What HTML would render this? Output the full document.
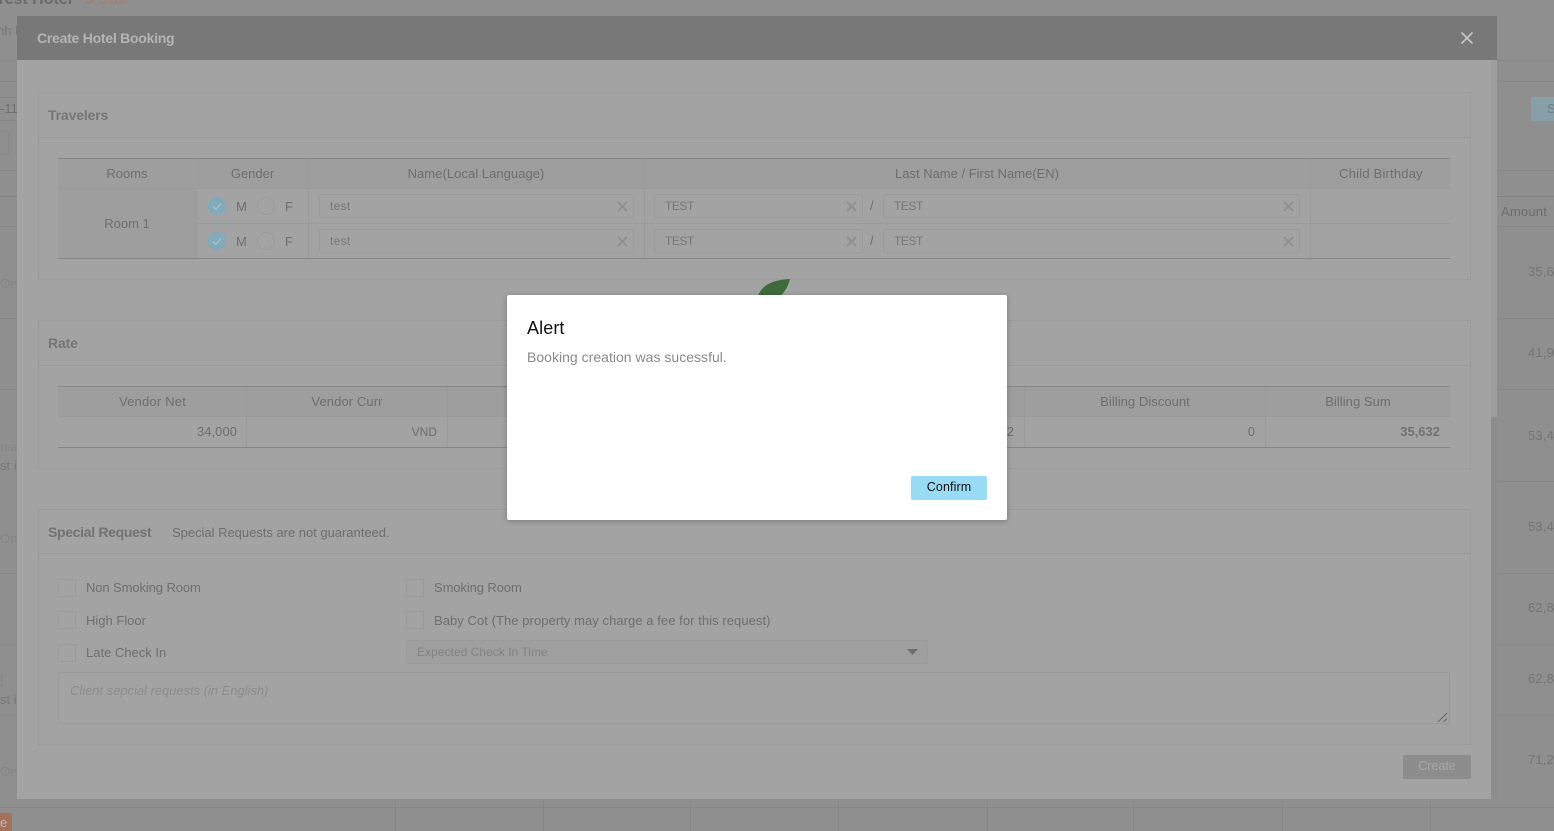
<!DOCTYPE html>
<html><head><meta charset="utf-8"><title>Create Hotel Booking</title>
<style>
*{box-sizing:border-box}
html,body{margin:0;padding:0}
html{width:1554px;height:831px;overflow:hidden}
body{width:1554px;height:831px;overflow:hidden;position:relative;background:#8f8f8f;font-family:"Liberation Sans",sans-serif;font-size:13px;color:#6e6e6e}
.a{position:absolute}
.t{position:absolute;white-space:nowrap;line-height:16px;letter-spacing:0}
.c{transform:translateX(-50%)}
.r{transform:translateX(-100%)}
.h{position:absolute;height:1px;background:#9a9a9a}
.v{position:absolute;width:1px;background:#9b9b9b}
.dk{position:absolute;height:1px;background:#858585}
.pan{position:absolute;left:38px;width:1433px;border:1px solid #9b9b9b}
.thd{position:absolute;background:#9e9e9e;height:30px}
.inp{position:absolute;height:24px;border:1px solid #9b9b9b;border-radius:2px;background:#a3a3a3}
.inp span{position:absolute;left:10px;top:3px;line-height:16px;font-size:12px;color:#777;letter-spacing:.3px}
.inp span.u{letter-spacing:-.45px}
.inp svg{position:absolute;right:5px;top:6px}
.rad{position:absolute;width:18px;height:18px;border-radius:50%;border:1px solid #9a9a9a}
.rad.on{background:#82aab8;border:0}
.rad svg{position:absolute;left:0;top:0}
.cb{position:absolute;width:18px;height:18px;border:1px solid #9a9a9a;background:#a3a3a3}
.hd{font-size:14px;font-weight:bold;color:#757575;letter-spacing:-.15px}
</style></head><body>

<!-- background page remnants -->
<div class="t" style="left:-4px;top:-8px;font-size:16px;font-weight:bold;color:#6a6a6a">Test Hotel</div>
<div class="t" style="left:85px;top:-8px;font-size:16px;font-weight:bold;color:#a08274">5 Star</div>
<div class="t" style="left:-3px;top:23px;color:#777">nh l</div>
<div class="t" style="left:0;top:101px;color:#707070">-11</div>
<div class="t" style="left:0;top:276px;color:#858585">Onl</div>
<div class="t" style="left:0;top:439px;color:#858585;font-size:12px">rea</div>
<div class="t" style="left:0;top:458px;color:#777">st i</div>
<div class="t" style="left:0;top:531px;color:#858585">Onl</div>
<div class="t" style="left:0;top:672px;color:#858585">]</div>
<div class="t" style="left:0;top:692px;color:#777">st i</div>
<div class="t" style="left:0;top:764px;color:#858585">Onl</div>
<div class="h" style="left:0;top:60px;width:17px;background:#878787"></div>
<div class="h" style="left:0;top:81px;width:17px;background:#878787"></div>
<div class="h" style="left:0;top:97px;width:17px;background:#878787"></div>
<div class="h" style="left:0;top:120px;width:17px;background:#878787"></div>
<div class="h" style="left:0;top:170px;width:17px;background:#878787"></div>
<div class="h" style="left:0;top:196px;width:17px;background:#808080"></div>
<div class="h" style="left:0;top:226px;width:17px;background:#878787"></div>
<div class="h" style="left:0;top:318px;width:17px;background:#878787"></div>
<div class="h" style="left:0;top:389px;width:17px;background:#878787"></div>
<div class="h" style="left:0;top:573px;width:17px;background:#878787"></div>
<div class="h" style="left:0;top:644px;width:17px;background:#878787"></div>
<div class="h" style="left:0;top:715px;width:17px;background:#878787"></div>
<div class="a" style="left:0;top:131px;width:9px;height:24px;border:1px solid #888;border-left:0;border-radius:0 2px 2px 0"></div>
<div class="a" style="left:0;top:813px;width:12px;height:18px;background:#a5705c;border-radius:0 2px 0 0;color:#c9b5ac;font-size:13px;line-height:20px">e</div>
<div class="h" style="left:0;top:807px;width:1554px;background:#878787"></div>
<div class="v" style="left:395px;top:799px;height:32px;background:#878787"></div>
<div class="v" style="left:543px;top:799px;height:32px;background:#878787"></div>
<div class="v" style="left:690px;top:799px;height:32px;background:#878787"></div>
<div class="v" style="left:838px;top:799px;height:32px;background:#878787"></div>
<div class="v" style="left:987px;top:799px;height:32px;background:#878787"></div>
<div class="v" style="left:1133px;top:799px;height:32px;background:#878787"></div>
<div class="v" style="left:1282px;top:799px;height:32px;background:#878787"></div>
<div class="v" style="left:1430px;top:799px;height:32px;background:#878787"></div>

<div class="h" style="left:1497px;top:60px;width:57px;background:#878787"></div>
<div class="h" style="left:1497px;top:81px;width:57px;background:#878787"></div>
<div class="h" style="left:1497px;top:170px;width:57px;background:#878787"></div>
<div class="h" style="left:1497px;top:196px;width:57px;background:#808080"></div>
<div class="h" style="left:1497px;top:226px;width:57px;background:#878787"></div>
<div class="h" style="left:1497px;top:318px;width:57px;background:#878787"></div>
<div class="h" style="left:1497px;top:389px;width:57px;background:#878787"></div>
<div class="h" style="left:1497px;top:481px;width:57px;background:#878787"></div>
<div class="h" style="left:1497px;top:573px;width:57px;background:#878787"></div>
<div class="h" style="left:1497px;top:644px;width:57px;background:#878787"></div>
<div class="h" style="left:1497px;top:715px;width:57px;background:#878787"></div>
<div class="a" style="left:1531px;top:97px;width:23px;height:24px;background:#87a0a8;border-radius:2px 0 0 2px;color:#6f7f85;line-height:24px;padding-left:16px">S</div>
<div class="t" style="left:1501px;top:204px;color:#6c6c6c;letter-spacing:.2px">Amount</div>
<div class="t" style="left:1528px;top:264px;color:#747474;letter-spacing:.2px">35,6</div>
<div class="t" style="left:1528px;top:345px;color:#747474;letter-spacing:.2px">41,9</div>
<div class="t" style="left:1528px;top:428px;color:#747474;letter-spacing:.2px">53,4</div>
<div class="t" style="left:1528px;top:519px;color:#747474;letter-spacing:.2px">53,4</div>
<div class="t" style="left:1528px;top:600px;color:#747474;letter-spacing:.2px">62,8</div>
<div class="t" style="left:1528px;top:671px;color:#747474;letter-spacing:.2px">62,8</div>
<div class="t" style="left:1528px;top:752px;color:#747474;letter-spacing:.2px">71,2</div>

<!-- modal -->
<div class="a" style="left:17px;top:16px;width:1480px;height:44px;background:#787878"></div>
<div class="a" style="left:17px;top:60px;width:1480px;height:739px;background:#a3a3a3"></div>
<div class="a" style="left:1491px;top:60px;width:6px;height:357px;background:#9d9d9d"></div>
<div class="a" style="left:1491px;top:417px;width:6px;height:382px;background:#8d8d8d"></div>
<div class="t" style="left:37px;top:30px;font-size:14px;font-weight:bold;color:#b4b4b4;letter-spacing:-.25px">Create Hotel Booking</div>
<svg class="a" style="left:1460px;top:31px" width="14" height="14" viewBox="0 0 14 14"><path d="M1.5 1.5L12.5 12.5M12.5 1.5L1.5 12.5" stroke="#c8c8c8" stroke-width="1.6" fill="none"/></svg>

<!-- Travelers -->
<div class="pan" style="top:92px;height:188px"></div>
<div class="h" style="left:38px;top:137px;width:1433px"></div>
<div class="t hd" style="left:48px;top:107px">Travelers</div>
<div class="thd" style="left:58px;top:159px;width:1392px"></div>
<div class="a" style="left:58px;top:189px;width:139px;height:69px;background:#9e9e9e"></div>
<div class="dk" style="left:58px;top:158px;width:1392px"></div>
<div class="dk" style="left:58px;top:258px;width:1392px"></div>
<div class="h" style="left:58px;top:188px;width:1392px"></div>
<div class="h" style="left:198px;top:223px;width:1252px"></div>
<div class="v" style="left:197px;top:159px;height:99px"></div>
<div class="v" style="left:308px;top:159px;height:99px"></div>
<div class="v" style="left:644px;top:159px;height:99px"></div>
<div class="v" style="left:1310px;top:159px;height:99px"></div>
<div class="t c" style="left:127px;top:166px">Rooms</div>
<div class="t c" style="left:252.5px;top:166px">Gender</div>
<div class="t c" style="left:476px;top:166px;letter-spacing:.05px">Name(Local Language)</div>
<div class="t c" style="left:977px;top:166px">Last Name / First Name(EN)</div>
<div class="t c" style="left:1381px;top:166px;letter-spacing:.2px">Child Birthday</div>
<div class="t c" style="left:127px;top:216px">Room 1</div>

<div class="rad on" style="left:208px;top:197px"><svg width="18" height="18"><path d="M5 9.5L8 12.3L13 6.5" stroke="#a9c4cd" stroke-width="1.3" fill="none"/></svg></div>
<div class="t" style="left:236px;top:199px">M</div>
<div class="rad" style="left:257px;top:197px"></div>
<div class="t" style="left:285px;top:199px">F</div>
<div class="rad on" style="left:208px;top:232px"><svg width="18" height="18"><path d="M5 9.5L8 12.3L13 6.5" stroke="#a9c4cd" stroke-width="1.3" fill="none"/></svg></div>
<div class="t" style="left:236px;top:234px">M</div>
<div class="rad" style="left:257px;top:232px"></div>
<div class="t" style="left:285px;top:234px">F</div>

<div class="inp" style="left:319px;top:194px;width:315px"><span>test</span><svg width="11" height="11"><path d="M1 1L10 10M10 1L1 10" stroke="#909090" stroke-width="2"/></svg></div>
<div class="inp" style="left:319px;top:229px;width:315px"><span>test</span><svg width="11" height="11"><path d="M1 1L10 10M10 1L1 10" stroke="#909090" stroke-width="2"/></svg></div>
<div class="inp" style="left:654px;top:194px;width:209px"><span class="u">TEST</span><svg width="11" height="11"><path d="M1 1L10 10M10 1L1 10" stroke="#909090" stroke-width="2"/></svg></div>
<div class="inp" style="left:654px;top:229px;width:209px"><span class="u">TEST</span><svg width="11" height="11"><path d="M1 1L10 10M10 1L1 10" stroke="#909090" stroke-width="2"/></svg></div>
<div class="inp" style="left:883px;top:194px;width:417px"><span class="u">TEST</span><svg width="11" height="11"><path d="M1 1L10 10M10 1L1 10" stroke="#909090" stroke-width="2"/></svg></div>
<div class="inp" style="left:883px;top:229px;width:417px"><span class="u">TEST</span><svg width="11" height="11"><path d="M1 1L10 10M10 1L1 10" stroke="#909090" stroke-width="2"/></svg></div>
<div class="t" style="left:870px;top:198px">/</div>
<div class="t" style="left:870px;top:233px">/</div>

<!-- Rate -->
<div class="pan" style="top:320px;height:149px"></div>
<div class="h" style="left:38px;top:365px;width:1433px"></div>
<div class="t hd" style="left:48px;top:335px">Rate</div>
<div class="thd" style="left:58px;top:387px;width:1392px"></div>
<div class="dk" style="left:58px;top:386px;width:1392px"></div>
<div class="dk" style="left:58px;top:447px;width:1392px"></div>
<div class="h" style="left:58px;top:416px;width:1392px"></div>
<div class="v" style="left:246px;top:387px;height:60px"></div>
<div class="v" style="left:447px;top:387px;height:60px"></div>
<div class="v" style="left:1024px;top:387px;height:60px"></div>
<div class="v" style="left:1265px;top:387px;height:60px"></div>
<div class="t c" style="left:152.5px;top:394px;letter-spacing:.2px">Vendor Net</div>
<div class="t c" style="left:347px;top:394px;letter-spacing:.1px">Vendor Curr</div>
<div class="t c" style="left:1145px;top:394px;letter-spacing:.05px">Billing Discount</div>
<div class="t c" style="left:1358px;top:394px;letter-spacing:.05px">Billing Sum</div>
<div class="t r" style="left:237px;top:424px;letter-spacing:.05px">34,000</div>
<div class="t r" style="left:437px;top:424px;font-size:12px">VND</div>
<div class="t r" style="left:1014px;top:424px">2</div>
<div class="t r" style="left:1255px;top:424px">0</div>
<div class="t r" style="left:1440px;top:424px;font-weight:bold;color:#727272">35,632</div>

<!-- Special Request -->
<div class="pan" style="top:509px;height:236px"></div>
<div class="h" style="left:38px;top:553px;width:1433px"></div>
<div class="t hd" style="left:48px;top:524px;color:#727272;letter-spacing:-.32px">Special Request</div>
<div class="t" style="left:172px;top:525px;letter-spacing:-.02px">Special Requests are not guaranteed.</div>
<div class="cb" style="left:58px;top:579px"></div><div class="t" style="left:86px;top:580px;letter-spacing:-.1px">Non Smoking Room</div>
<div class="cb" style="left:58px;top:611px"></div><div class="t" style="left:86px;top:613px">High Floor</div>
<div class="cb" style="left:58px;top:644px"></div><div class="t" style="left:86px;top:645px">Late Check In</div>
<div class="cb" style="left:406px;top:579px"></div><div class="t" style="left:434px;top:580px;letter-spacing:-.1px">Smoking Room</div>
<div class="cb" style="left:406px;top:611px"></div><div class="t" style="left:434px;top:613px;letter-spacing:.06px">Baby Cot (The property may charge a fee for this request)</div>
<div class="inp" style="left:406px;top:640px;width:522px;background:#9f9f9f"><span style="color:#828282;letter-spacing:.03px">Expected Check In Time</span><svg style="right:9px;top:8px" width="11" height="6"><path d="M0 0H11L5.5 6Z" fill="#6e6e6e"/></svg></div>
<div class="a" style="left:58px;top:672px;width:1392px;height:52px;border:1px solid #9a9a9a;border-radius:2px"></div>
<div class="t" style="left:70px;top:683px;font-style:italic;color:#8c8c8c;letter-spacing:-.03px">Client sepcial requests (in English)</div>
<svg class="a" style="left:1437px;top:712px" width="11" height="11"><path d="M1 10L10 1M6.5 10L10 6.5" stroke="#6a6a6a" stroke-width="1"/></svg>
<div class="a" style="left:1403px;top:755px;width:68px;height:24px;background:#8d8d8d;border-radius:2px;color:#a8a8a8;text-align:center;line-height:23px;font-size:12.5px">Create</div>

<!-- leaf spinner -->
<svg class="a" style="left:750px;top:275px" width="50" height="22"><path d="M8 21C12 10 22 5 40 4C38 12 34 18 30 21Z" fill="#3f6b3c"/></svg>

<!-- Alert -->
<div class="a" style="left:507px;top:295px;width:500px;height:225px;background:#fff;border-radius:2px;box-shadow:0 1px 6px rgba(0,0,0,.25)"></div>
<div class="t" style="left:527px;top:319px;font-size:18px;line-height:18px;color:#111;letter-spacing:.1px">Alert</div>
<div class="t" style="left:527px;top:349px;font-size:14px;color:#8a8a8a;letter-spacing:.02px">Booking creation was sucessful.</div>
<div class="a" style="left:911px;top:476px;width:76px;height:24px;background:#97dcf4;border-radius:2px;color:#111;text-align:center;line-height:22px;font-size:12.5px;letter-spacing:.1px">Confirm</div>
</body></html>
